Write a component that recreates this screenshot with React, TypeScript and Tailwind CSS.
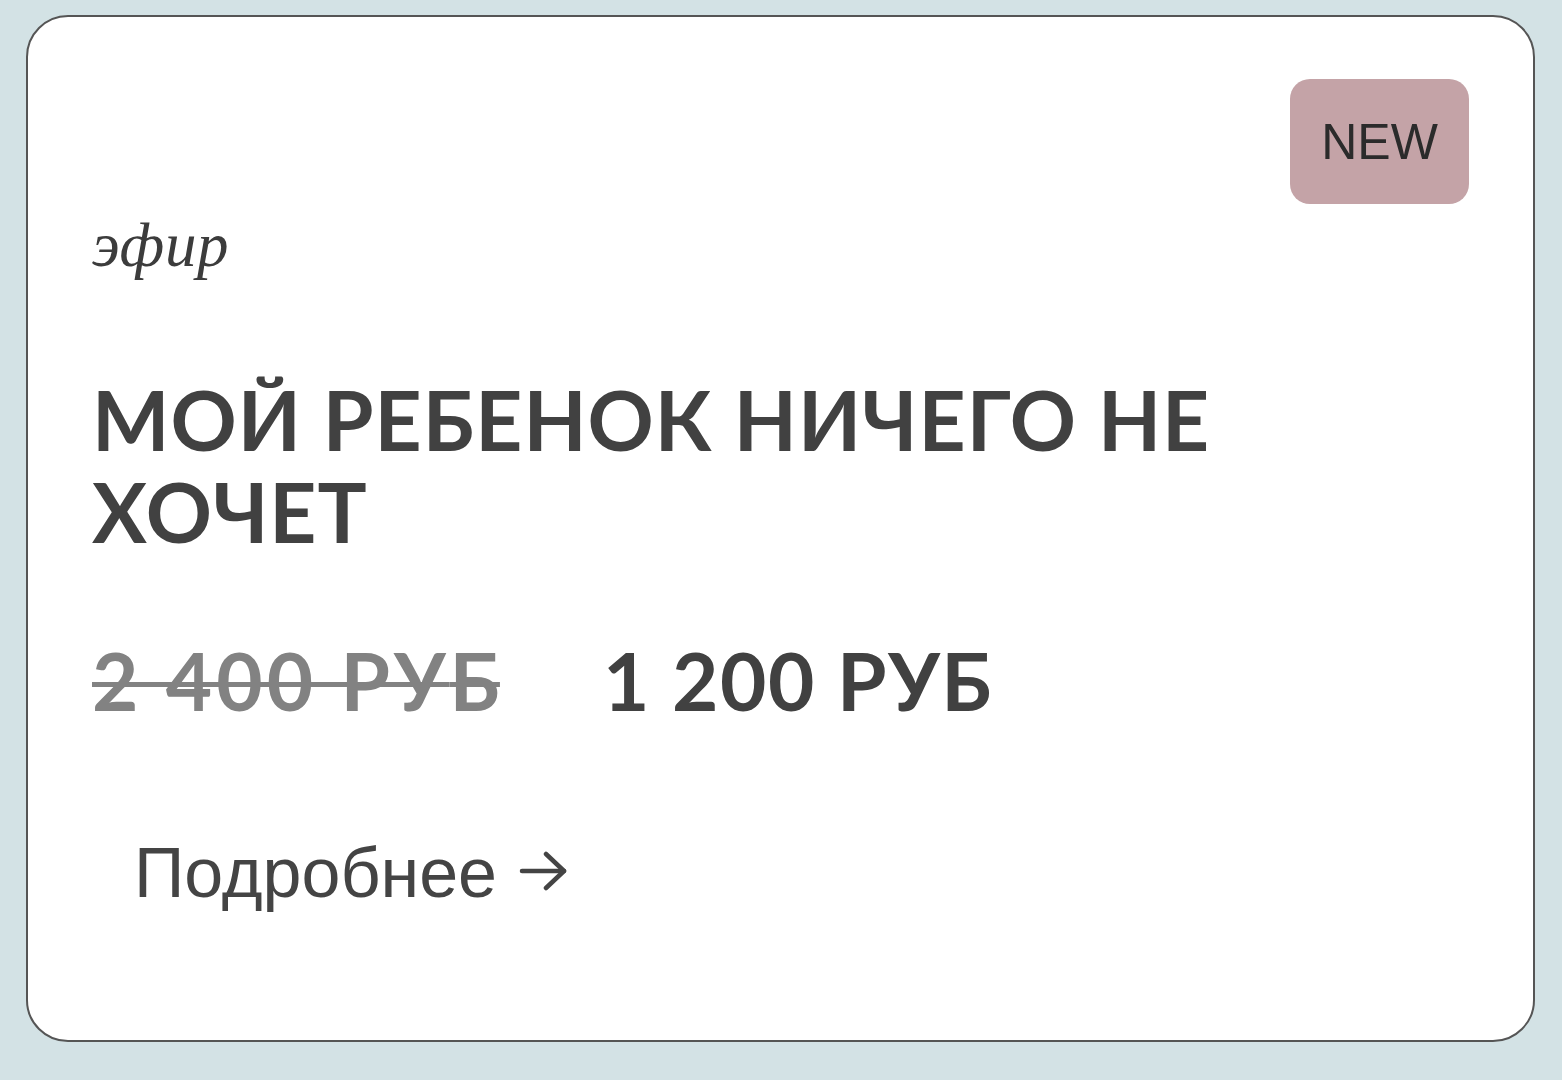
export default function App() {
  return (
    <div className="min-h-[1080px] w-full bg-[#d3e2e5] pl-[26px] pr-[27px] pt-[15px] pb-[38px]">
      <div className="flex h-[1027px] flex-col rounded-[42px] border-2 border-[#555555] bg-white pl-[64px] pr-[64px] pt-[62px]">
        <div className="flex justify-end">
          <span className="flex h-[125px] w-[179px] items-center justify-center rounded-[20px] bg-[#c4a3a7] font-['Liberation_Sans',sans-serif] text-[50px] leading-none text-[#2b2b2b]">
            NEW
          </span>
        </div>
        <p className="mt-[10px] font-['Liberation_Serif',serif] text-[63px] italic leading-none tracking-[0.01em] text-[#3c3c3c]">
          эфир
        </p>
        <h2 className="mt-[96px] max-w-[1200px] font-['Lato',sans-serif] text-[82px] font-bold uppercase leading-[92px] tracking-[0.012em] text-[#414141]">
          Мой ребенок ничего не хочет
        </h2>
        <div className="mt-[83px] flex items-baseline gap-[103px] font-['Lato',sans-serif] text-[80px] font-bold leading-none">
          <span className="text-[#828282] line-through decoration-[5px]">
            <span className="tracking-[0.05em]">2 400 РУ</span>Б
          </span>
          <span className="tracking-[0.02em] text-[#414141]">1 200 РУБ</span>
        </div>
        <a className="mt-[118px] ml-[42px] flex items-center gap-[22px] text-[#444444]">
          <span className="font-['Liberation_Sans',sans-serif] text-[70px] leading-none">Подробнее</span>
          <svg width="48" height="40" viewBox="0 0 48 40" fill="none" stroke="currentColor" strokeWidth="4.5" strokeLinecap="round" strokeLinejoin="round" className="-mt-[4px]">
            <path d="M3 20H45" />
            <path d="M27 3L45 20L27 37" />
          </svg>
        </a>
      </div>
    </div>
  );
}
